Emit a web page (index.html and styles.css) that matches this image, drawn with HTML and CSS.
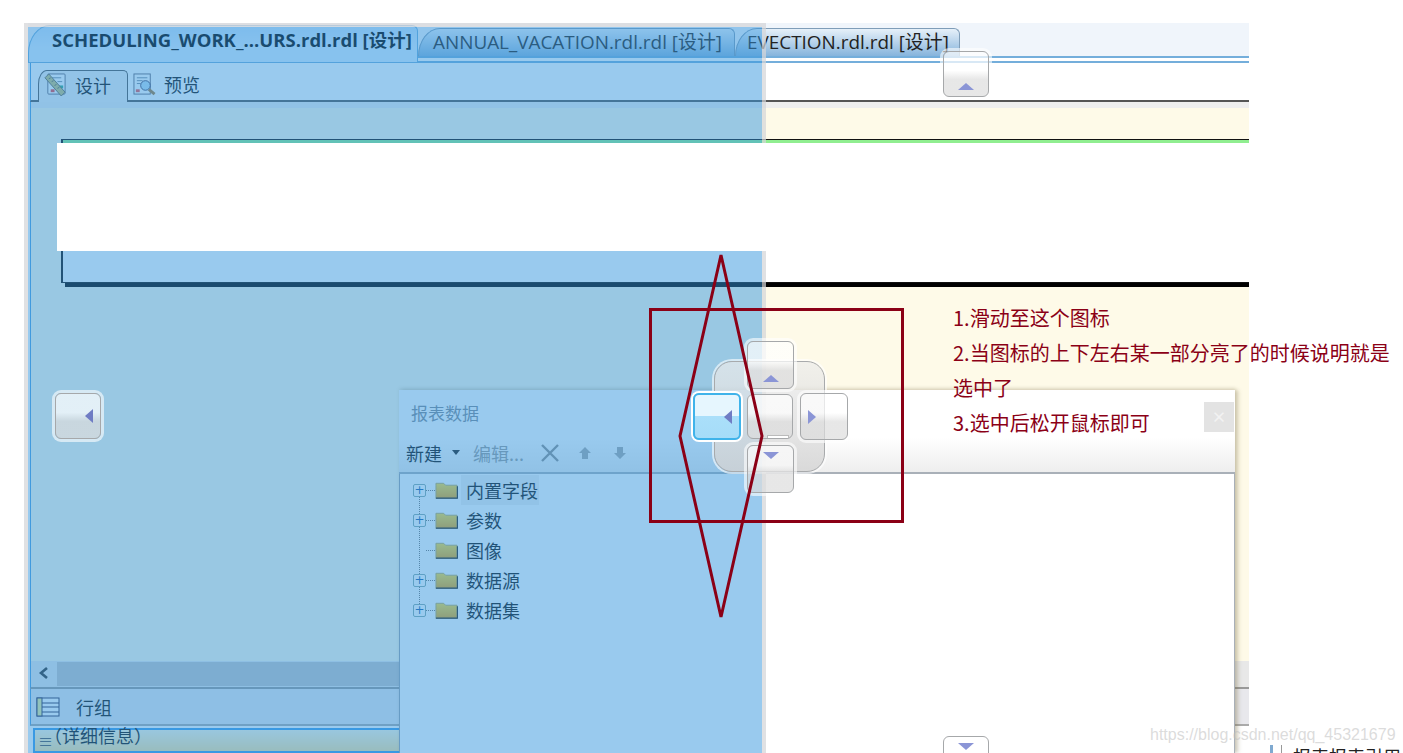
FILE: index.html
```html
<!DOCTYPE html>
<html lang="zh">
<head>
<meta charset="utf-8">
<title>Report designer docking</title>
<link rel="stylesheet" href="styles.css">
</head>
<body>
<svg class="defs" width="0" height="0"><defs><linearGradient id="fold" x1="0" y1="0" x2="0" y2="1"><stop offset="0" stop-color="#ffe040"/><stop offset="1" stop-color="#e8a418"/></linearGradient></defs></svg>
<div class="app">
  <div class="doc-tabs">
    <div class="doc-tab active">SCHEDULING_WORK_...URS.rdl.rdl [设计]</div>
    <div class="doc-tab second">ANNUAL_VACATION.rdl.rdl [设计]</div>
    <div class="doc-tab third">EVECTION.rdl.rdl [设计]</div>
  </div>
  <div class="tab-rule"></div>
  <div class="view-tabs">
    <div class="view-tab on">
      <svg class="view-icon" viewBox="0 0 24 24"><rect x="4" y="1" width="18" height="21" rx="1" fill="#fff" stroke="#667"/><path d="M8 5h10M14 9h5" stroke="#789"/><rect x="15" y="13" width="5" height="3" fill="#3a8"/><rect x="7" y="17" width="4" height="3" fill="#e44"/><path d="M1 5l4-4 17 19-4 4z" fill="#c8c27a" stroke="#665"/><path d="M5 6l2-1M8 9l2-1M11 13l2-1M14 16l2-1" stroke="#665"/></svg>
      <span>设计</span>
    </div>
    <div class="view-tab">
      <svg class="view-icon" viewBox="0 0 24 24"><rect x="1" y="1" width="17" height="21" fill="#fff" stroke="#667"/><path d="M4 5h11M4 8h6M4 11h4" stroke="#789"/><rect x="3" y="17" width="4" height="3" fill="#e55"/><circle cx="13" cy="13" r="5" fill="#bfe0f5" stroke="#446"/><path d="M16.5 17l6 5" stroke="#a87b3c" stroke-width="3"/></svg>
      <span>预览</span>
    </div>
  </div>
  <div class="canvas">
    <div class="report-frame"></div>
  </div>
  <div class="scrollbar">
    <svg class="scroll-arrow" viewBox="0 0 26 24"><path d="M16 7l-6 5 6 5" fill="none" stroke="#333" stroke-width="2.6"/></svg>
    <div class="scroll-thumb"></div>
  </div>
  <div class="group-head">
    <svg class="group-icon" viewBox="0 0 24 20"><rect x="1" y="1" width="22" height="18" fill="#fff" stroke="#335"/><path d="M1 6h22M1 10h22M1 15h22" stroke="#335"/><rect x="1" y="1" width="5" height="18" fill="#ee9" stroke="#335"/></svg>
    <span>行组</span>
  </div>
  <div class="detail-row"><span class="detail-mark">≡</span><span class="detail-text">（详细信息）</span></div>
</div>

<section class="popup">
  <header class="popup-title">
    <span>报表数据</span>
    <div class="popup-close">×</div>
  </header>
  <div class="popup-tools">
    <span class="tool-new">新建</span><span class="tool-caret"></span>
    <span class="tool-dim">编辑...</span>
    <svg class="tool-x" viewBox="0 0 20 20"><path d="M2 2l16 16M18 2L2 18" stroke="#8e8e8e" stroke-width="2.4"/></svg>
    <svg class="tool-arrow" viewBox="0 0 14 14"><path d="M7 1l6 6H10v6H4V7H1z" fill="#a8a8a8"/></svg>
    <svg class="tool-arrow" viewBox="0 0 14 14"><path d="M7 13L1 7h3V1h6v6h3z" fill="#a8a8a8"/></svg>
  </div>
  <ul class="tree">
    <li class="tree-row"><span class="plus">+</span><span class="dots"></span><svg class="folder" viewBox="0 0 24 18"><path d="M1 4V2h8l2 2h12v14H1z" class="folder-body"/><path d="M1 17.5h22.5V5" class="folder-edge"/></svg><span class="tree-label picked">内置字段</span></li>
    <li class="tree-row"><span class="plus">+</span><span class="dots"></span><svg class="folder" viewBox="0 0 24 18"><path d="M1 4V2h8l2 2h12v14H1z" class="folder-body"/><path d="M1 17.5h22.5V5" class="folder-edge"/></svg><span class="tree-label">参数</span></li>
    <li class="tree-row"><span class="plus none"></span><span class="dots"></span><svg class="folder" viewBox="0 0 24 18"><path d="M1 4V2h8l2 2h12v14H1z" class="folder-body"/><path d="M1 17.5h22.5V5" class="folder-edge"/></svg><span class="tree-label">图像</span></li>
    <li class="tree-row"><span class="plus">+</span><span class="dots"></span><svg class="folder" viewBox="0 0 24 18"><path d="M1 4V2h8l2 2h12v14H1z" class="folder-body"/><path d="M1 17.5h22.5V5" class="folder-edge"/></svg><span class="tree-label">数据源</span></li>
    <li class="tree-row"><span class="plus">+</span><span class="dots"></span><svg class="folder" viewBox="0 0 24 18"><path d="M1 4V2h8l2 2h12v14H1z" class="folder-body"/><path d="M1 17.5h22.5V5" class="folder-edge"/></svg><span class="tree-label">数据集</span></li>
  </ul>
</section>

<div class="dock-preview"></div>
<div class="redaction"></div>

<div class="dock-btn solo top"><i class="tri up"></i></div>
<div class="dock-btn solo left"><i class="tri lt"></i></div>
<div class="dock-btn solo bottom"><i class="tri dn"></i></div>

<div class="compass">
  <div class="plate"></div>
  <div class="dock-btn c-up"><i class="tri up"></i></div>
  <div class="dock-btn c-left hot"><i class="tri lt"></i></div>
  <div class="dock-btn c-mid"><i class="mid-bar"></i></div>
  <div class="dock-btn c-right"><i class="tri rt"></i></div>
  <div class="dock-btn c-down"><i class="tri dn"></i></div>
</div>

<div class="red-box"></div>
<svg class="diamond" viewBox="0 0 90 366"><path d="M43 2L84 183 43 364 2 183z" fill="none" stroke="#8b0016" stroke-width="3"/></svg>

<div class="notes">
  <p>1.滑动至这个图标</p>
  <p>2.当图标的上下左右某一部分亮了的时候说明就是选中了</p>
  <p>3.选中后松开鼠标即可</p>
</div>

<div class="watermark">https://blog.csdn.net/qq_45321679</div>
<div class="corner-text"><i></i>报表报表引用</div>
</body>
</html>
```
FILE: styles.css
```css
* { box-sizing: border-box; }
html, body { margin: 0; padding: 0; }
body {
  width: 1403px; height: 753px; overflow: hidden; position: relative;
  background: #fff; color: #000;
  font-family: "Noto Sans CJK SC", "Noto Sans", sans-serif;
}
.defs { position: absolute; }
.app {
  position: absolute; left: 24px; top: 23px; width: 1225px; height: 730px;
  display: flex; flex-direction: column; padding-left: 6px; overflow: hidden;
  background: #fff;
}
.doc-tabs {
  height: 33px; margin-left: -2px; padding-top: 5px; display: flex; align-items: stretch;
  background: #f0f5fb; flex: none;
}
.doc-tab {
  font-family: "Open Sans", "Noto Sans CJK SC", sans-serif;
  border: 1px solid #7f9db8; border-bottom: 0; white-space: nowrap;
  background: linear-gradient(#e6f0f9, #86b4dc);
  border-radius: 22px 6px 0 0 / 28px 6px 0 0;
  font-size: 18.9px; line-height: 27px;
  color: #222;
}
.doc-tab.active {
  width: 390px; height: 37px; margin-top: -3px; padding-left: 23px; position: relative;
  font-weight: 700; font-size: 18.5px; color: #000;
  background: linear-gradient(#c6e2fb, #dbeeff 60%);
  border-color: #6faedd;
}
.doc-tab.second { width: 317px; padding-left: 14px; }
.doc-tab.third { width: 225px; padding-left: 11px; }
.tab-rule {
  height: 7px; flex: none; margin-left: -2px;
  background: linear-gradient(#74aedb 0 2px, #fff 2px 5px, #74aedb 5px 7px);
}
.view-tabs {
  height: 39px; flex: none; display: flex; align-items: flex-end; padding-left: 7px;
  border-bottom: 2px solid #555; border-left: 1px solid #4f9fdf; background: #fff;
}
.view-tab {
  height: 32px; display: flex; align-items: center; gap: 8px; padding: 0 5px 4px;
  font-size: 18px; color: #111; width: 91px; margin-bottom: -2px;
}
.view-tab.on {
  border: 1px solid #555; border-bottom: 0; border-radius: 9px 5px 0 0 / 14px 5px 0 0;
  background: #f0f0f0; padding-left: 5px; width: 90px;
}
.view-icon { width: 23px; height: 23px; flex: none; }
.canvas {
  flex: 1; min-height: 0; background: linear-gradient(#eeeeee 0 6px, #fefae8 6px); position: relative;
  padding: 37px 0 0 30px; border-left: 1px solid #4f9fdf;
}
.report-frame {
  height: 144px; background: linear-gradient(#90ee90 0 5px, #fff 5px);
  border: 1px solid #111; border-left-width: 2px; border-right: 0;
  box-shadow: 4px 4px 0 #000; margin-right: -10px; position: relative;
}
.scrollbar {
  height: 28px; flex: none; display: flex; background: #e8e8e8; border-bottom: 2px solid #999; border-left: 1px solid #4f9fdf;
}
.scroll-arrow { width: 26px; height: 24px; flex: none; }
.scroll-thumb { width: 1150px; background: #c6c4c4; margin: 1px 0; }
.group-head {
  height: 37px; flex: none; background: #e8e8ec; display: flex; align-items: center; gap: 16px; padding-left: 5px;
  font-size: 18px; color: #111; border-bottom: 2px solid #aaa; border-left: 1px solid #4f9fdf;
}
.group-icon { width: 24px; height: 20px; flex: none; }
.detail-row {
  height: 25px; margin-left: 3px; margin-top: 2px; flex: none; border: 2px solid #3f9ce8; border-right: 0;
  background: linear-gradient(#fff8e0, #ffe49e); display: flex; align-items: center;
  font-size: 18px; color: #111; line-height: 20px; padding-left: 3px; width: 370px; overflow: visible;
}
.detail-mark { color: #555; font-size: 15px; }
.detail-text { margin-left: -9px; margin-top: -11px; }

.popup {
  position: absolute; left: 399px; top: 390px; width: 836px; height: 363px;
  background: #fff; box-shadow: 3px 0 4px rgba(120,110,70,.35), 0 -2px 3px rgba(120,110,70,.12);
  display: flex; flex-direction: column;
}
.popup-title {
  height: 47px; flex: none; display: flex; justify-content: space-between; align-items: flex-start;
  padding: 11px 1px 0 12px; font-size: 17px; color: #7f8994; line-height: 24px;
}
.popup-close {
  width: 30px; height: 30px; margin-top: 1px; background: #e3e3e3; color: #f2f2f2; text-align: center;
  font-size: 15px; line-height: 30px; font-weight: 700;
}
.popup-tools {
  height: 37px; flex: none; display: flex; align-items: center; padding: 0 0 4px 7px;
  background: linear-gradient(#fff, #eeeeee); border-bottom: 2px solid #a9b0b8; font-size: 18px;
}
.tool-new { color: #111; width: 46px; }
.tool-caret { width: 0; height: 0; border: 4.5px solid transparent; border-top: 5px solid #222; border-bottom: 0; margin-right: 13px; }
.tool-dim { color: #9a9a9a; width: 67px; white-space: nowrap; }
.tool-x { width: 20px; height: 20px; margin-right: 18px; }
.tool-arrow { width: 14px; height: 14px; margin-right: 21px; }
.tree {
  list-style: none; margin: 0; padding: 1px 0 0 13px; flex: 1; border-left: 1px solid #9aa3ad; border-right: 1px solid #a9b0b8;
  position: relative;
}
.tree::before {
  content: ""; position: absolute; left: 19px; top: 22px; height: 120px; border-left: 1px dotted #777;
}
.tree-row { height: 30px; display: flex; align-items: center; font-size: 18px; color: #111; position: relative; }
.plus {
  width: 13px; height: 13px; border: 1px solid #8aa; border-radius: 2px; font-size: 12px; line-height: 10px;
  text-align: center; color: #1c5fa8; flex: none; background: #fff; font-family: "DejaVu Sans", sans-serif;
}
.plus.none { border: 0; background: none; }
.dots { width: 9px; border-top: 1px dotted #777; flex: none; }
.folder { width: 23px; height: 18px; flex: none; }
.folder-body { fill: url(#fold); stroke: #b9a860; }
.folder-edge { fill: none; stroke: #222; stroke-width: 1.4; }
.tree-label { margin-left: 3px; padding: 0 5px 2px; line-height: 30px; height: 30px; }
.tree-label.picked { background: #f0f0f0; width: 78px; white-space: nowrap; }

.dock-preview {
  position: absolute; left: 24px; top: 23px; width: 742px; height: 730px;
  background: rgba(51,150,221,.5); border: 4px solid rgba(212,214,216,.72);
  border-bottom: 0; background-clip: padding-box;
}
.redaction { position: absolute; left: 57px; top: 143px; width: 1192px; height: 108px; background: #fff; }

.dock-btn {
  position: absolute; border: 1px solid #a6a8aa; border-radius: 6px;
  background: linear-gradient(rgba(255,255,255,.72) 0 42%, rgba(221,221,221,.7) 62%, rgba(221,221,221,.7));
  box-shadow: 0 0 0 3px rgba(255,255,255,.6);
  display: flex; align-items: center; justify-content: center;
}
.dock-btn.solo { width: 46px; height: 46px; }
.solo.top { left: 943px; top: 51px; align-items: flex-end; padding-bottom: 6px; }
.solo.left { left: 55px; top: 393px; justify-content: flex-end; padding-right: 7px; }
.solo.bottom { left: 943px; top: 736px; align-items: flex-start; padding-top: 6px; }
.tri { width: 0; height: 0; display: block; border: 7px solid transparent; }
.tri.up { border-top: 0; border-bottom: 7px solid #8b95d6; border-left-width: 8px; border-right-width: 8px; }
.tri.dn { border-bottom: 0; border-top: 7px solid #8b95d6; border-left-width: 8px; border-right-width: 8px; }
.tri.lt { border-left: 0; border-right: 8px solid #6f7cc4; }
.tri.rt { border-right: 0; border-left: 8px solid #8b95d6; }

.compass { position: absolute; left: 690px; top: 338px; width: 160px; height: 158px; }
.plate {
  position: absolute; left: 24px; top: 23px; width: 111px; height: 111px; border-radius: 18px;
  border: 1px solid #a8aaac; background: linear-gradient(rgba(236,236,236,.72), rgba(212,212,212,.8));
  box-shadow: 0 0 0 2px rgba(255,255,255,.6);
}
.c-up { left: 57px; top: 3px; width: 47px; height: 48px; align-items: flex-end; padding-bottom: 6px; }
.c-left { left: 3px; top: 55px; width: 48px; height: 47px; justify-content: flex-end; padding-right: 7px; }
.c-mid { left: 57px; top: 56px; width: 46px; height: 45px; box-shadow: none; }
.c-right { left: 110px; top: 55px; width: 48px; height: 47px; justify-content: flex-start; padding-left: 7px; }
.c-down { left: 57px; top: 107px; width: 47px; height: 48px; align-items: flex-start; padding-top: 6px; }
.dock-btn.hot {
  background: linear-gradient(#e6f6fe 0 48%, #aadffa 50%, #a6dcf8);
  border: 2px solid #3fb3ea; box-shadow: 0 0 0 2px #fff;
}
.mid-bar { position: absolute; right: 3px; bottom: 0; width: 22px; height: 3px; background: #fff; border: 1px solid #bbb; border-bottom: 0; }

.red-box { position: absolute; left: 649px; top: 308px; width: 255px; height: 215px; border: 3px solid #8b0016; }
.diamond { position: absolute; left: 678px; top: 253px; width: 90px; height: 366px; }

.notes {
  position: absolute; left: 953px; top: 300px; width: 440px; margin: 0;
  font-size: 20px; line-height: 35px; color: #8b0016; word-break: break-all;
}
.notes p { margin: 0; }
.watermark {
  position: absolute; left: 1150px; top: 725px; font-size: 16px; line-height: 20px;
  color: rgba(190,190,190,.55); font-family: "Liberation Sans", sans-serif;
}
.corner-text {
  position: absolute; left: 1270px; top: 745px; font-size: 18px; line-height: 22px; color: #222; display: flex; gap: 11px; white-space: nowrap;
}
.corner-text i { width: 12px; height: 10px; border-left: 3px solid #7fa9d0; border-right: 1px solid #999; }
```
